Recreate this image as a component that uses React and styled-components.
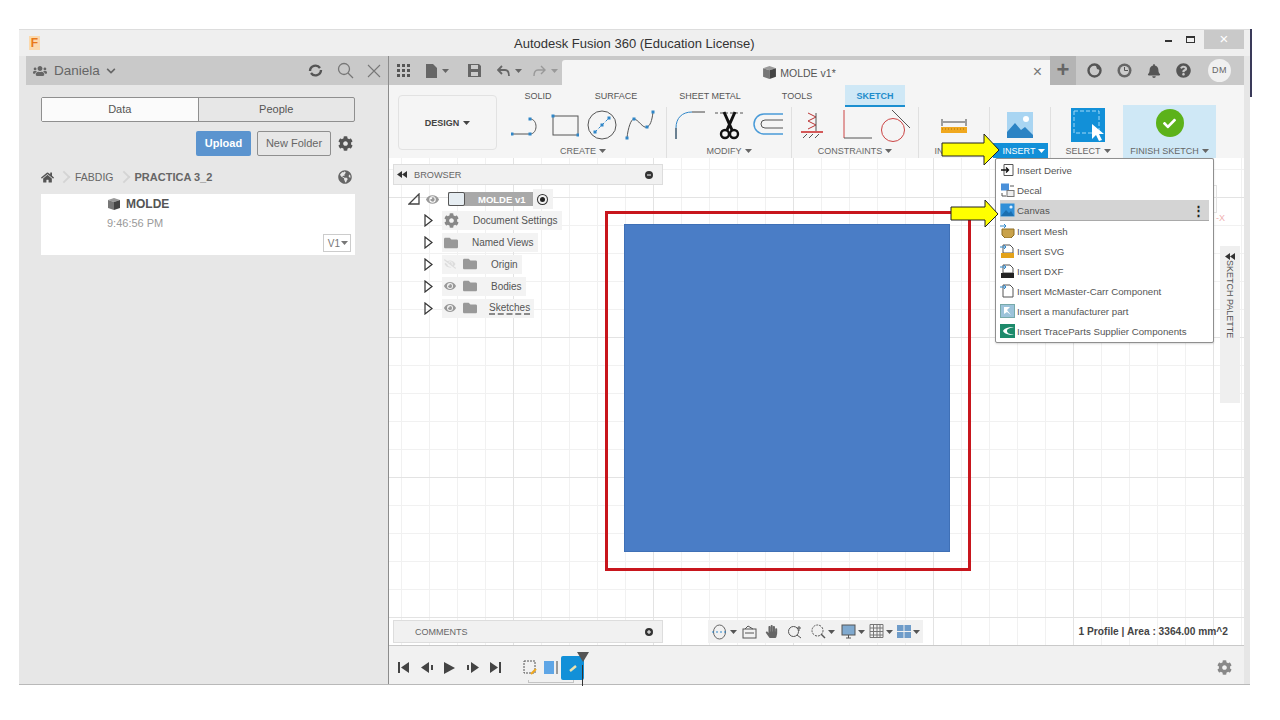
import React from 'react'
import styled, { createGlobalStyle } from 'styled-components'
import { FaCog, FaHome, FaBell, FaQuestionCircle, FaCheck, FaEye, FaEyeSlash, FaFolder, FaChevronDown, FaHandPaper, FaUsers, FaGlobeAmericas } from 'react-icons/fa'

const GlobalStyle = createGlobalStyle`
  body {
    margin: 0;
    background: #ffffff;
    font-family: "Liberation Sans", Arial, sans-serif;
    color: #555555;
  }
`

const Cube = ({ size = 14 }) => (
  <svg width={size} height={size} viewBox="0 0 14 14">
    <path d="M1 3l6-2 6 2-6 2z" fill="#9a9a9a" />
    <path d="M1 3l6 2v8l-6-2z" fill="#777" />
    <path d="M13 3l-6 2v8l6-2z" fill="#444" />
  </svg>
)

const Caret = () => (
  <svg width="7" height="4" viewBox="0 0 7 4">
    <path d="M0 0h7L3.5 4z" fill="currentColor" />
  </svg>
)

const DoubleArrow = () => (
  <svg width="10" height="7" viewBox="0 0 10 7">
    <path d="M5 0v7L0 3.500zM10 0v7L5 3.500z" fill="#333" />
  </svg>
)

const Line = ({ w, h, children }) => (
  <svg width={w} height={h} viewBox={`0 0 ${w} ${h}`} fill="none">
    {children}
  </svg>
)

const Dot = ({ x, y }) => <rect x={x - 1.5} y={y - 1.5} width="3" height="3" fill="#2f86c8" />

const MenuIcon = ({ kind }) => {
  if (kind === 'derive')
    return (
      <Line w={15} h={14}>
        <path d="M4 1.500h9v11H4z" stroke="#555" />
        <path d="M1 7h7M6 4.500L8.500 7 6 9.500" stroke="#111" strokeWidth="1.4" />
      </Line>
    )
  if (kind === 'decal')
    return (
      <Line w={15} h={14}>
        <rect x="1" y="0.5" width="8" height="7" fill="#4a90d9" />
        <path d="M10 3h4M2 10v3h4" stroke="#555" />
        <rect x="7" y="7.5" width="7" height="6" fill="#eee" stroke="#777" />
      </Line>
    )
  if (kind === 'canvas')
    return (
      <Line w={15} h={14}>
        <rect x="0.5" y="0.5" width="14" height="13" fill="#2f8fd8" />
        <path d="M1 13l5-6 3 3 2-2 3 5z" fill="#1c6fb0" />
        <circle cx="11" cy="4" r="1.6" fill="#dff1ff" />
      </Line>
    )
  if (kind === 'mesh')
    return (
      <Line w={15} h={14}>
        <path d="M2 5h12v6l-3 3H5l-3-3z" fill="#c9a24a" stroke="#8c6d24" />
        <path d="M0 2h6M4 0l2 2-2 2" stroke="#2f86c8" />
      </Line>
    )
  if (kind === 'svg' || kind === 'dxf')
    return (
      <Line w={15} h={14}>
        <path d="M3 1h7l3 3v5H3z" fill="#fff" stroke="#555" />
        <path d="M0 3h6M4 1l2 2-2 2" stroke="#2f86c8" />
        <rect x="1" y="9" width="13" height="5" fill={kind === 'svg' ? '#e3a21a' : '#222'} />
      </Line>
    )
  if (kind === 'mcmaster')
    return (
      <Line w={15} h={14}>
        <path d="M3 1h7l3 3v9H3z" fill="#fff" stroke="#555" />
        <path d="M0 3h6M4 1l2 2-2 2" stroke="#2f86c8" />
      </Line>
    )
  if (kind === 'maker')
    return (
      <Line w={15} h={14}>
        <rect x="0.5" y="0.5" width="14" height="13" fill="#9cc3da" stroke="#7aa" />
        <path d="M4 3h6L7 6l4 5-4-3-3 2z" fill="#fff" />
      </Line>
    )
  return (
    <Line w={15} h={14}>
      <rect width="15" height="14" fill="#1d8a6b" />
      <path d="M14 3C7 3 4 5 3 7c1 2 4 4 11 4-5-1-7-2-7-4s2-3 7-4z" fill="#fff" />
    </Line>
  )
}

const menuItems = [
  { kind: 'derive', label: 'Insert Derive' },
  { kind: 'decal', label: 'Decal' },
  { kind: 'canvas', label: 'Canvas', active: true },
  { kind: 'mesh', label: 'Insert Mesh' },
  { kind: 'svg', label: 'Insert SVG' },
  { kind: 'dxf', label: 'Insert DXF' },
  { kind: 'mcmaster', label: 'Insert McMaster-Carr Component' },
  { kind: 'maker', label: 'Insert a manufacturer part' },
  { kind: 'trace', label: 'Insert TraceParts Supplier Components' },
]

const treeItems = [
  { label: 'Document Settings', icon: 'gear' },
  { label: 'Named Views', icon: 'folder' },
  { label: 'Origin', icon: 'folder', eye: 'off' },
  { label: 'Bodies', icon: 'folder', eye: 'on' },
  { label: 'Sketches', icon: 'folder', eye: 'on', hatched: true },
]

const App = () => (
  <Page>
    <GlobalStyle />
    <Window>
      <TitleBar>
        <Logo>F</Logo>
        <Title>Autodesk Fusion 360 (Education License)</Title>
        <WinControls>
          <WinBtn>
            <Minimize />
          </WinBtn>
          <WinBtn>
            <Maximize />
          </WinBtn>
          <CloseBtn>×</CloseBtn>
        </WinControls>
      </TitleBar>
      <Main>
        <LeftPanel>
          <TeamHeader>
            <FaUsers size={14} color="#666" />
            <TeamName>Daniela</TeamName>
            <FaChevronDown size={10} color="#666" />
            <HeaderTools>
              <Line w={17} h={15}>
                <path d="M3 8a5.500 5.500 0 0 1 10-3M14 7a5.500 5.500 0 0 1-10 3" stroke="#555" strokeWidth="2.4" />
              </Line>
              <Line w={17} h={17}>
                <circle cx="7" cy="7" r="5.5" stroke="#777" strokeWidth="1.3" />
                <path d="M11 11l5 5" stroke="#777" strokeWidth="1.3" />
              </Line>
              <Line w={14} h={14}>
                <path d="M1 1l12 12M13 1L1 13" stroke="#777" strokeWidth="1.1" />
              </Line>
            </HeaderTools>
          </TeamHeader>
          <PanelBody>
            <Segment>
              <SegmentTab $active>Data</SegmentTab>
              <SegmentTab>People</SegmentTab>
            </Segment>
            <ActionRow>
              <UploadBtn>Upload</UploadBtn>
              <FolderBtn>New Folder</FolderBtn>
              <GearWrap>
                <FaCog size={15} color="#555" />
              </GearWrap>
            </ActionRow>
            <Crumbs>
              <FaHome size={13} color="#555" />
              <Chevron />
              <Crumb>FABDIG</Crumb>
              <Chevron />
              <Crumb $current>PRACTICA 3_2</Crumb>
              <GlobeWrap>
                <FaGlobeAmericas size={14} color="#666" />
              </GlobeWrap>
            </Crumbs>
            <FileCard>
              <FileName>
                <Cube />
                MOLDE
              </FileName>
              <FileTime>9:46:56 PM</FileTime>
              <Version>
                V1
                <Caret />
              </Version>
            </FileCard>
          </PanelBody>
        </LeftPanel>
        <RightPanel>
          <TopBar>
            <QuickTools>
              <Line w={13} h={13}>
                <path d="M0 1.500h13M0 6.500h13M0 11.500h13" stroke="#555" strokeWidth="3" strokeDasharray="3 2" />
              </Line>
              <QuickGroup $mr={3}>
                <Line w={11} h={14}>
                  <path d="M0 0h7l4 4v10H0z" fill="#666" />
                </Line>
                <Caret />
              </QuickGroup>
              <Line w={13} h={13}>
                <path d="M0 0h11l2 2v11H0z" fill="#666" />
                <rect x="3" y="1" width="7" height="4" fill="#ccc" />
                <rect x="3" y="8" width="7" height="4" fill="#ccc" />
              </Line>
              <QuickGroup $mr={-5}>
                <Line w={13} h={12}>
                  <path d="M5 1L1 5l4 4M1 5h7c3 0 4 2 4 6" stroke="#666" strokeWidth="1.8" />
                </Line>
                <Caret />
              </QuickGroup>
              <QuickGroup $muted>
                <Line w={13} h={12}>
                  <path d="M8 1l4 4-4 4M12 5H5c-3 0-4 2-4 6" stroke="#999" strokeWidth="1.4" />
                </Line>
                <Caret />
              </QuickGroup>
            </QuickTools>
            <DocTab>
              <DocName>
                <Cube size={15} />
                MOLDE v1*
              </DocName>
              <DocClose>×</DocClose>
            </DocTab>
            <UserTools>
              <PlusBtn>+</PlusBtn>
              <UserIcons>
                <Line w={15} h={15}>
                  <circle cx="7.5" cy="7.5" r="6" stroke="#555" strokeWidth="2.4" />
                  <path d="M7 1l5 1 1 5-3-1-1-3z" fill="#555" />
                </Line>
                <Line w={15} h={15}>
                  <circle cx="7.5" cy="7.5" r="7" fill="#666" />
                  <circle cx="7.5" cy="7.5" r="4.5" fill="#ccc" />
                  <path d="M7.500 4v3.500H11" stroke="#555" />
                </Line>
                <FaBell size={14} color="#555" />
                <FaQuestionCircle size={15} color="#555" />
                <Avatar>DM</Avatar>
              </UserIcons>
            </UserTools>
          </TopBar>
          <Ribbon>
            <DesignBtn>
              DESIGN
              <Caret />
            </DesignBtn>
            <RibbonBody>
              <TabRow>
                <RibbonTab $w={60}>SOLID</RibbonTab>
                <RibbonTab $w={96}>SURFACE</RibbonTab>
                <RibbonTab $w={92}>SHEET METAL</RibbonTab>
                <RibbonTab $w={82}>TOOLS</RibbonTab>
                <SketchTab>SKETCH</SketchTab>
              </TabRow>
              <Groups>
                <Group $w={158} $pr={8}>
                  <IconRow $gap={8}>
                    <Line w={32} h={24}>
                      <path d="M1 21h18c8 0 8-15 0-15" stroke="#555" />
                      <Dot x={1} y={21} />
                      <Dot x={19} y={21} />
                      <Dot x={19} y={6} />
                    </Line>
                    <Line w={28} h={24}>
                      <rect x="2" y="3" width="25" height="19" stroke="#555" />
                      <Dot x={2} y={3} />
                      <Dot x={27} y={22} />
                    </Line>
                    <Line w={30} h={30}>
                      <circle cx="15" cy="15" r="14" stroke="#555" />
                      <path d="M8 22L22 8" stroke="#2f86c8" strokeDasharray="3 2" />
                      <Dot x={8} y={22} />
                      <Dot x={15} y={15} />
                      <Dot x={22} y={8} />
                    </Line>
                    <Line w={30} h={32}>
                      <path d="M2 29c1-10 4-19 7-19 4 0 9 10 13 8 3-1 5-6 6-15" stroke="#555" />
                      <Dot x={2} y={29} />
                      <Dot x={9} y={10} />
                      <Dot x={22} y={18} />
                      <Dot x={28} y={3} />
                    </Line>
                  </IconRow>
                  <GroupLabel>
                    CREATE
                    <Caret />
                  </GroupLabel>
                </Group>
                <Group $w={125} $sep>
                  <IconRow $gap={8}>
                    <Line w={32} h={30}>
                      <path d="M2 29V18C2 8 8 2 18 2" stroke="#2f86c8" />
                      <path d="M2 29V18M18 2h13" stroke="#444" />
                    </Line>
                    <Line w={30} h={30}>
                      <path d="M1 3h28" stroke="#555" strokeDasharray="3 2" />
                      <path d="M10 2l8 18M21 2l-8 18" stroke="#111" strokeWidth="3" />
                      <circle cx="11" cy="24" r="4" stroke="#111" strokeWidth="2.4" />
                      <circle cx="20" cy="24" r="4" stroke="#111" strokeWidth="2.4" />
                    </Line>
                    <Line w={32} h={26}>
                      <path d="M31 2H12a10 10 0 0 0 0 20h19" stroke="#4a9bd8" strokeWidth="1.5" />
                      <path d="M31 8H13a4 4 0 0 0 0 8h18" stroke="#555" />
                    </Line>
                  </IconRow>
                  <GroupLabel>
                    MODIFY
                    <Caret />
                  </GroupLabel>
                </Group>
                <Group $w={127} $sep>
                  <IconRow $gap={19}>
                    <Line w={24} h={28}>
                      <path d="M8 2l8 4-8 4 8 4-8 4" stroke="#b33" />
                      <path d="M16 2v18" stroke="#555" />
                      <path d="M1 21h22" stroke="#c33" strokeWidth="1.6" />
                      <path d="M3 27l4-4M9 27l4-4M15 27l4-4" stroke="#555" />
                    </Line>
                    <Line w={68} h={36}>
                      <path d="M1 3v28" stroke="#c44" />
                      <path d="M1 31h28" stroke="#555" />
                      <circle cx="50" cy="23" r="11.5" stroke="#c44" />
                      <path d="M49 3l18 18" stroke="#555" />
                    </Line>
                  </IconRow>
                  <GroupLabel>
                    CONSTRAINTS
                    <Caret />
                  </GroupLabel>
                </Group>
                <Group $w={71} $sep>
                  <IconRow>
                    <Line w={26} h={15}>
                      <path d="M1 1v7M25 1v7" stroke="#444" />
                      <path d="M2 4h22" stroke="#444" />
                      <rect y="9" width="26" height="6" fill="#f0a81e" />
                      <path d="M1 11h24" stroke="#a8740f" strokeDasharray="1 2" />
                    </Line>
                  </IconRow>
                  <GroupLabel>INSPECT</GroupLabel>
                </Group>
                <Group $w={61} $sep>
                  <IconRow>
                    <Line w={26} h={26}>
                      <rect width="26" height="26" fill="#a9d5f2" />
                      <path d="M0 26v-6l8-9 6 7 4-3 8 8v3z" fill="#2b83c4" />
                      <circle cx="19" cy="7" r="3" fill="#fff" />
                    </Line>
                  </IconRow>
                  <InsertLabel>
                    INSERT
                    <Caret />
                  </InsertLabel>
                </Group>
                <Group $w={71} $sep $pl={4}>
                  <IconRow>
                    <Line w={34} h={34}>
                      <rect width="34" height="34" fill="#1290d8" />
                      <rect x="3" y="3" width="25" height="22" stroke="#9fd8f7" strokeDasharray="4 2" />
                      <path d="M21 16v15l4-4 3 6 3-1-3-6h5z" fill="#fff" />
                    </Line>
                  </IconRow>
                  <GroupLabel>
                    SELECT
                    <Caret />
                  </GroupLabel>
                </Group>
                <FinishGroup>
                  <FinishIcon>
                    <FaCheck size={13} color="#fff" />
                  </FinishIcon>
                  <GroupLabel>
                    FINISH SKETCH
                    <Caret />
                  </GroupLabel>
                </FinishGroup>
              </Groups>
            </RibbonBody>
          </Ribbon>
          <Canvas>
            <Sheet />
            <RedFrame />
            <BrowserPanel>
              <PanelBar>
                <PanelArrows>
                  <DoubleArrow />
                </PanelArrows>
                <PanelTitle>BROWSER</PanelTitle>
                <PanelToggle>
                  <Line w={8} h={8}>
                    <circle cx="4" cy="4" r="4" fill="#333" />
                    <path d="M2 4h4" stroke="#fff" />
                  </Line>
                </PanelToggle>
              </PanelBar>
              <Tree>
                <RootRow>
                  <Line w={12} h={12}>
                    <path d="M1 11L11 1v10z" stroke="#444" strokeWidth="1.3" />
                  </Line>
                  <RootEye>
                    <FaEye size={13} color="#999" />
                  </RootEye>
                  <RootChip>
                    <RootBox />
                    <RootName>MOLDE v1</RootName>
                  </RootChip>
                  <RadioWrap>
                    <Radio />
                  </RadioWrap>
                </RootRow>
                {treeItems.map((item) => (
                  <TreeRow key={item.label}>
                    <Line w={10} h={13}>
                      <path d="M1 1l7 5.500L1 12z" stroke="#333" strokeWidth="1.2" />
                    </Line>
                    <TreeChip>
                      {item.eye === 'on' && <FaEye size={12} color="#999" />}
                      {item.eye === 'off' && <FaEyeSlash size={12} color="#ddd" />}
                      {item.icon === 'gear' ? <FaCog size={15} color="#888" /> : <FaFolder size={14} color="#999" />}
                      <TreeLabel $hatched={item.hatched}>{item.label}</TreeLabel>
                    </TreeChip>
                  </TreeRow>
                ))}
              </Tree>
            </BrowserPanel>
            <InsertMenu>
              {menuItems.map((item) => (
                <MenuItem key={item.label} $active={item.active}>
                  <MenuIcon kind={item.kind} />
                  <MenuText>{item.label}</MenuText>
                  {item.active && <MenuDots>⋮</MenuDots>}
                </MenuItem>
              ))}
            </InsertMenu>
            <AxisBox />
            <AxisLabel>-X</AxisLabel>
            <Palette>
              <DoubleArrow />
              <PaletteText>SKETCH PALETTE</PaletteText>
            </Palette>
            <CommentsPanel>
              <CommentsTitle>COMMENTS</CommentsTitle>
              <PanelToggle>
                <Line w={8} h={8}>
                  <circle cx="4" cy="4" r="4" fill="#333" />
                  <path d="M2 4h4M4 2v4" stroke="#fff" />
                </Line>
              </PanelToggle>
            </CommentsPanel>
            <NavBar>
              <Line w={17} h={16}>
                <ellipse cx="8.5" cy="8" rx="6" ry="7" stroke="#666" />
                <path d="M1 8h15" stroke="#2f86c8" strokeDasharray="2 2" />
              </Line>
              <Caret />
              <NavGap $w={1} />
              <Line w={15} h={15}>
                <rect x="1" y="5" width="13" height="9" stroke="#555" />
                <path d="M3 9h9M3 5l3-3 5 3" stroke="#555" />
              </Line>
              <NavGap $w={4} />
              <FaHandPaper size={13} color="#666" />
              <NavGap $w={5} />
              <Line w={16} h={15}>
                <circle cx="6.5" cy="7.5" r="5" stroke="#555" />
                <path d="M10 11l4 3M12 2v5M10 4h4" stroke="#555" />
              </Line>
              <NavGap $w={4} />
              <Line w={15} h={15}>
                <circle cx="6.5" cy="6.5" r="5.5" stroke="#555" strokeDasharray="2 1" />
                <path d="M10 10l4 4" stroke="#555" strokeWidth="1.4" />
              </Line>
              <Caret />
              <NavGap $w={2} />
              <Line w={15} h={15}>
                <rect x="1" y="1" width="13" height="10" fill="#7fa9cf" stroke="#555" />
                <path d="M5 14h5M7.500 11v3" stroke="#555" />
              </Line>
              <Caret />
              <NavGap $w={0} />
              <Line w={15} h={15}>
                <path d="M1 .5h13v13H1zM1 4h13M1 7.500h13M1 11h13M4.500 .5v13M8 .5v13M11 .5v13" stroke="#777" />
              </Line>
              <Caret />
              <NavGap $w={0} />
              <Line w={14} h={13}>
                <path d="M0 0h6.500v6H0zM7.500 0H14v6H7.500zM0 7h6.500v6H0zM7.500 7H14v6H7.500z" fill="#6f9cc9" />
              </Line>
              <Caret />
            </NavBar>
            <Status>1 Profile | Area : 3364.00 mm^2</Status>
          </Canvas>
          <Timeline>
            <Playback>
              <Line w={11} h={11}>
                <path d="M0 0h2v11H0zM11 0v11L3 5.500z" fill="#444" />
              </Line>
              <Line w={12} h={11}>
                <path d="M8 0v11L0 5.500zM10 3h2v5h-2z" fill="#444" />
              </Line>
              <Line w={11} h={12}>
                <path d="M0 0l11 6-11 6z" fill="#444" />
              </Line>
              <Line w={12} h={11}>
                <path d="M4 0v11l8-5.500zM0 3h2v5H0z" fill="#444" />
              </Line>
              <Line w={11} h={11}>
                <path d="M11 0H9v11h2zM0 0v11l8-5.500z" fill="#444" />
              </Line>
            </Playback>
            <Steps>
              <Line w={14} h={15}>
                <rect x="1" y="1" width="11" height="12" stroke="#555" strokeDasharray="2 1" />
                <path d="M8 14l5-5" stroke="#f0a81e" strokeWidth="2" />
              </Line>
              <Line w={14} h={15}>
                <rect x="0" y="1" width="10" height="13" fill="#5fa6e6" />
                <path d="M13 1v13" stroke="#444" />
              </Line>
              <CurrentStep>
                <Line w={10} h={10}>
                  <path d="M2 8l6-5" stroke="#e9e2b0" strokeWidth="2.4" />
                </Line>
                <Marker />
              </CurrentStep>
              <Bracket />
            </Steps>
            <TimelineGear>
              <FaCog size={15} color="#888" />
            </TimelineGear>
          </Timeline>
        </RightPanel>
        <SideStrip />
      </Main>
      <TopArrow viewBox="0 0 59 33">
        <path d="M1 10h42V1l15 16-15 15v-9H1z" fill="#ffff00" stroke="#222" />
      </TopArrow>
      <MenuArrow viewBox="0 0 49 29">
        <path d="M1 8h34V1l13 14-13 13v-7H1z" fill="#ffff00" stroke="#222" />
      </MenuArrow>
      <EdgeLine />
    </Window>
  </Page>
)

export default App

const Page = styled.div`
  width: 1280px;
  height: 720px;
  padding: 29px 0 0 19px;
  box-sizing: border-box;
  overflow: hidden;
`

const Window = styled.div`
  position: relative;
  display: flex;
  flex-direction: column;
  width: 1231px;
  height: 656px;
  background: #efefef;
  border-bottom: 1px solid #b9b9b9;
  box-sizing: border-box;
`

const TitleBar = styled.div`
  position: relative;
  display: flex;
  align-items: flex-start;
  height: 27px;
  border-top: 1px solid #dddddd;
  box-sizing: border-box;
`

const Logo = styled.div`
  margin: 6px 0 0 10px;
  width: 11px;
  height: 14px;
  background: #fbd9ad;
  color: #e8781a;
  font-size: 12px;
  font-weight: bold;
  line-height: 14px;
  text-align: center;
`

const Title = styled.div`
  position: absolute;
  left: 495px;
  top: 6px;
  color: #333333;
  font-size: 13px;
`

const WinControls = styled.div`
  display: flex;
  align-items: center;
  margin-left: auto;
  margin-right: 6px;
  height: 19px;
`

const WinBtn = styled.div`
  display: flex;
  align-items: center;
  justify-content: center;
  width: 22px;
`

const Minimize = styled.div`
  width: 7px;
  height: 2px;
  margin-top: 3px;
  background: #333333;
`

const Maximize = styled.div`
  width: 7px;
  height: 4px;
  border: 1px solid #333333;
  border-top-width: 2px;
`

const CloseBtn = styled.div`
  margin-left: 3px;
  width: 40px;
  height: 19px;
  background: #c9c9c9;
  color: #ffffff;
  font-size: 15px;
  line-height: 18px;
  text-align: center;
`

const Main = styled.div`
  display: flex;
  flex: 1;
  min-height: 0;
`

const LeftPanel = styled.div`
  width: 369px;
  background: #e7e7e7;
`

const TeamHeader = styled.div`
  display: flex;
  align-items: center;
  gap: 6px;
  margin-left: 7px;
  padding: 0 7px;
  height: 29px;
  background: #c9c9c9;
`

const TeamName = styled.span`
  margin-left: 1px;
  color: #666666;
  font-size: 13.5px;
`

const HeaderTools = styled.div`
  display: flex;
  align-items: center;
  gap: 13px;
  margin-left: auto;
`

const PanelBody = styled.div`
  padding: 12px 33px 0 22px;
`

const Segment = styled.div`
  display: flex;
  height: 25px;
  border: 1px solid #8f8f8f;
  border-radius: 2px;
  box-sizing: border-box;
`

const SegmentTab = styled.div`
  flex: 1;
  background: ${({ $active }) => ($active ? '#fbfbfb' : 'transparent')};
  border-right: ${({ $active }) => ($active ? '1px solid #8f8f8f' : 'none')};
  color: #555555;
  font-size: 11px;
  line-height: 23px;
  text-align: center;
`

const ActionRow = styled.div`
  display: flex;
  align-items: center;
  justify-content: flex-end;
  margin: 9px -5px 0 0;
  height: 25px;
`

const UploadBtn = styled.div`
  width: 55px;
  height: 25px;
  background: #5b94cf;
  border-radius: 2px;
  color: #ffffff;
  font-size: 11px;
  font-weight: bold;
  line-height: 24px;
  text-align: center;
`

const FolderBtn = styled.div`
  margin-left: 6px;
  width: 74px;
  height: 25px;
  border: 1px solid #8f8f8f;
  border-radius: 2px;
  box-sizing: border-box;
  color: #666666;
  font-size: 11px;
  line-height: 23px;
  text-align: center;
`

const GearWrap = styled.div`
  display: flex;
  justify-content: center;
  width: 29px;
`

const Crumbs = styled.div`
  display: flex;
  align-items: center;
  margin-top: 12px;
  height: 18px;
`

const Chevron = styled.div`
  margin: 0 6px 0 5px;
  width: 8px;
  height: 8px;
  border-top: 2px solid #d4d4d4;
  border-right: 2px solid #d4d4d4;
  transform: rotate(45deg) scale(0.9);
`

const Crumb = styled.span`
  color: #666666;
  font-size: ${({ $current }) => ($current ? '11px' : '10.5px')};
  font-weight: ${({ $current }) => ($current ? 'bold' : 'normal')};
`

const GlobeWrap = styled.div`
  display: flex;
  margin: 0 3px 0 auto;
`

const FileCard = styled.div`
  position: relative;
  margin-top: 8px;
  padding: 3px 0 0 66px;
  height: 61px;
  background: #ffffff;
  box-sizing: border-box;
`

const FileName = styled.div`
  display: flex;
  align-items: center;
  gap: 5px;
  color: #555555;
  font-size: 12px;
  font-weight: bold;
`

const FileTime = styled.div`
  margin-top: 6px;
  color: #9a9a9a;
  font-size: 11px;
`

const Version = styled.div`
  position: absolute;
  top: 40px;
  right: 4px;
  display: flex;
  align-items: center;
  gap: 1px;
  padding: 0 2px 0 4px;
  height: 16px;
  border: 1px solid #cccccc;
  color: #777777;
  font-size: 10px;
`

const RightPanel = styled.div`
  display: flex;
  flex: 1;
  flex-direction: column;
  min-width: 0;
  border-left: 1px solid #8c8c8c;
`

const TopBar = styled.div`
  display: flex;
  height: 29px;
  background: #c9c9c9;
`

const QuickTools = styled.div`
  display: flex;
  align-items: center;
  gap: 16px;
  padding-left: 8px;
  width: 173px;
  box-sizing: border-box;
`

const QuickGroup = styled.div`
  display: flex;
  align-items: center;
  gap: 5px;
  margin-right: ${({ $mr }) => $mr || 0}px;
  color: ${({ $muted }) => ($muted ? '#999999' : '#666666')};
`

const DocTab = styled.div`
  position: relative;
  display: flex;
  align-items: center;
  justify-content: center;
  flex: 1;
  margin-top: 4px;
  background: #f5f5f5;
  border-radius: 3px 0 0 0;
`

const DocName = styled.div`
  display: flex;
  align-items: center;
  gap: 3px;
  margin-right: 14px;
  color: #555555;
  font-size: 10.5px;
`

const DocClose = styled.span`
  position: absolute;
  right: 8px;
  top: 4px;
  color: #777777;
  font-size: 16px;
  line-height: 16px;
`

const UserTools = styled.div`
  display: flex;
  align-items: center;
  width: 194px;
`

const PlusBtn = styled.div`
  width: 26px;
  height: 29px;
  background: #b4b4b4;
  color: #666666;
  font-size: 22px;
  font-weight: bold;
  line-height: 28px;
  text-align: center;
`

const UserIcons = styled.div`
  display: flex;
  flex: 1;
  align-items: center;
  gap: 15px;
  padding-left: 11px;
`

const Avatar = styled.div`
  margin-left: 2px;
  width: 23px;
  height: 23px;
  border-radius: 50%;
  background: #f0f0f0;
  color: #666666;
  font-size: 9px;
  line-height: 23px;
  letter-spacing: 0.5px;
  text-align: center;
`

const Ribbon = styled.div`
  display: flex;
  align-items: flex-start;
  height: 73px;
  background: #f5f5f5;
  box-sizing: border-box;
`

const DesignBtn = styled.div`
  display: flex;
  align-items: center;
  justify-content: center;
  gap: 4px;
  margin: 10px 0 0 9px;
  width: 99px;
  height: 55px;
  border: 1px solid #e2e2e2;
  border-radius: 4px;
  box-sizing: border-box;
  color: #444444;
  font-size: 9px;
  font-weight: bold;
`

const RibbonBody = styled.div`
  display: flex;
  flex-direction: column;
  margin-left: 11px;
  flex: 1;
`

const TabRow = styled.div`
  display: flex;
  height: 22px;
`

const RibbonTab = styled.div`
  width: ${({ $w }) => $w}px;
  padding-top: 6px;
  color: #555555;
  font-size: 9px;
  text-align: center;
`

const SketchTab = styled.div`
  margin-left: 7px;
  width: 60px;
  height: 22px;
  padding-top: 6px;
  background: #cfe8f6;
  border-bottom: 2px solid #1b8fd0;
  box-sizing: border-box;
  color: #1f8ccb;
  font-size: 9px;
  font-weight: bold;
  text-align: center;
`

const Groups = styled.div`
  display: flex;
  height: 51px;
`

const Group = styled.div`
  display: flex;
  flex-direction: column;
  align-items: center;
  width: ${({ $w }) => $w}px;
  padding-right: ${({ $pr }) => $pr || 0}px;
  padding-left: ${({ $pl }) => $pl || 0}px;
  box-sizing: border-box;
  ${({ $sep }) => $sep && 'border-left: 1px solid #e0e0e0;'}
`

const IconRow = styled.div`
  display: flex;
  flex: none;
  align-items: center;
  justify-content: center;
  gap: ${({ $gap }) => $gap || 0}px;
  height: 36px;
`

const GroupLabel = styled.div`
  display: flex;
  flex: none;
  align-items: center;
  justify-content: center;
  gap: 3px;
  height: 15px;
  color: #666666;
  font-size: 9px;
  white-space: nowrap;
`

const InsertLabel = styled(GroupLabel)`
  padding-left: 8px;
  width: 55px;
  background: #1290d8;
  box-sizing: border-box;
  color: #ffffff;
`

const FinishGroup = styled.div`
  display: flex;
  flex-direction: column;
  align-items: center;
  justify-content: flex-end;
  margin: -2px 0 0 2px;
  width: 93px;
  height: 53px;
  background: #cfe8f6;
`

const FinishIcon = styled.div`
  display: flex;
  align-items: center;
  justify-content: center;
  margin-bottom: 6px;
  width: 28px;
  height: 28px;
  border-radius: 50%;
  background: #5cb21a;
`

const Canvas = styled.div`
  position: relative;
  flex: 1;
  background-color: #ffffff;
  background-image:
    linear-gradient(to right, #e3e3e3 1px, transparent 1px),
    linear-gradient(to bottom, #e3e3e3 1px, transparent 1px),
    linear-gradient(to right, #f1f1f1 1px, transparent 1px),
    linear-gradient(to bottom, #f1f1f1 1px, transparent 1px);
  background-size: 140px 140px, 140px 140px, 28px 28px, 28px 28px;
  background-position: 124px 0, 0 39px, 12px 0, 0 11px;
`

const Sheet = styled.div`
  position: absolute;
  left: 235px;
  top: 66px;
  width: 326px;
  height: 328px;
  background: #4a7dc6;
  border: 1px solid #3f70b6;
  box-sizing: border-box;
`

const RedFrame = styled.div`
  position: absolute;
  left: 216px;
  top: 53px;
  width: 366px;
  height: 360px;
  border: 3px solid #c8161d;
  box-sizing: border-box;
`

const BrowserPanel = styled.div`
  position: absolute;
  left: 4px;
  top: 6px;
  width: 270px;
`

const PanelBar = styled.div`
  display: flex;
  align-items: center;
  height: 21px;
  background: #f1f1f1;
  border: 1px solid #dddddd;
  box-sizing: border-box;
`

const PanelArrows = styled.span`
  display: flex;
  margin-left: 3px;
`

const PanelTitle = styled.span`
  margin-left: 7px;
  color: #666666;
  font-size: 9.2px;
`

const PanelToggle = styled.span`
  display: flex;
  margin: 0 9px 0 auto;
`

const Tree = styled.div`
  display: flex;
  flex-direction: column;
  gap: 2px;
  padding: 4px 0 0 15px;
`

const RootRow = styled.div`
  display: flex;
  align-items: center;
  height: 20px;
`

const RootEye = styled.div`
  display: flex;
  margin: 0 7px 0 6px;
`

const RootChip = styled.div`
  display: flex;
  align-items: center;
  margin-left: 2px;
  height: 14px;
  background: #a9a9a9;
`

const RootBox = styled.div`
  width: 15px;
  height: 12px;
  background: #e6edf2;
  border: 1px solid #555555;
  border-radius: 2px;
`

const RootName = styled.span`
  padding: 0 7px 0 13px;
  color: #ffffff;
  font-size: 9.5px;
  font-weight: bold;
`

const RadioWrap = styled.div`
  display: flex;
  align-items: center;
  justify-content: center;
  width: 20px;
  height: 20px;
  background: #f2f2f2;
`

const Radio = styled.div`
  width: 5px;
  height: 5px;
  border-radius: 50%;
  background: #222222;
  box-shadow: 0 0 0 2px #f2f2f2, 0 0 0 3px #333333;
`

const TreeRow = styled.div`
  display: flex;
  align-items: center;
  gap: 8px;
  padding-left: 16px;
  height: 19.8px;
`

const TreeChip = styled.div`
  display: flex;
  align-items: center;
  gap: 7px;
  padding: 0 4px 0 2px;
  height: 19px;
  background: #f3f3f3;
`

const TreeLabel = styled.span`
  margin-left: 7px;
  color: #555555;
  font-size: 10px;
  ${({ $hatched }) => $hatched && 'border-bottom: 2px dashed #8a8a8a; margin-left: 5px;'}
`

const InsertMenu = styled.div`
  position: absolute;
  left: 606px;
  top: 0;
  display: flex;
  flex-direction: column;
  padding: 1px 4px 0;
  width: 219px;
  height: 185px;
  background: #ffffff;
  border: 1px solid #8f8f8f;
  border-radius: 2px;
  box-sizing: border-box;
  box-shadow: 0 1px 2px rgba(0, 0, 0, 0.15);
  z-index: 2;
`

const MenuItem = styled.div`
  display: flex;
  align-items: center;
  flex: none;
  gap: 2px;
  height: 20px;
  background: ${({ $active }) => ($active ? '#d4d4d4' : 'transparent')};
  border-bottom: ${({ $active }) => ($active ? '1px solid #a9a9a9' : 'none')};
`

const MenuText = styled.span`
  color: #555555;
  font-size: 9.7px;
  white-space: nowrap;
`

const MenuDots = styled.span`
  margin: 0 4px 0 auto;
  color: #222222;
  font-size: 13px;
  font-weight: bold;
`

const AxisBox = styled.div`
  position: absolute;
  left: 820px;
  top: 27px;
  width: 8px;
  height: 28px;
  border: 1px solid #e2e2e2;
  box-sizing: border-box;
`

const AxisLabel = styled.span`
  position: absolute;
  left: 827px;
  top: 55px;
  color: #f0b0b0;
  font-size: 9px;
`

const Palette = styled.div`
  position: absolute;
  left: 831px;
  top: 88px;
  display: flex;
  flex-direction: column;
  align-items: center;
  padding-top: 7px;
  width: 20px;
  height: 157px;
  background: #efefef;
  box-sizing: border-box;
`

const PaletteText = styled.span`
  color: #555555;
  font-size: 9px;
  writing-mode: vertical-rl;
`

const CommentsPanel = styled.div`
  position: absolute;
  left: 4px;
  bottom: 2px;
  display: flex;
  align-items: center;
  width: 270px;
  height: 23px;
  background: #f1f1f1;
  border: 1px solid #dddddd;
  box-sizing: border-box;
`

const CommentsTitle = styled.span`
  margin-left: 21px;
  color: #666666;
  font-size: 9px;
`

const NavBar = styled.div`
  position: absolute;
  left: 319px;
  bottom: 2px;
  display: flex;
  align-items: center;
  gap: 2px;
  padding: 0 3px;
  height: 23px;
  background: #f1f1f1;
  color: #555555;
`

const NavGap = styled.span`
  width: ${({ $w }) => $w}px;
`

const Status = styled.div`
  position: absolute;
  right: 16px;
  bottom: 8px;
  color: #444444;
  font-size: 10.2px;
  font-weight: bold;
  white-space: nowrap;
`

const Timeline = styled.div`
  display: flex;
  align-items: center;
  padding-top: 5px;
  height: 39px;
  background: #f1f1f1;
  border-top: 1px solid #c9c9c9;
  box-sizing: border-box;
`

const Playback = styled.div`
  display: flex;
  align-items: center;
  gap: 11.5px;
  margin-left: 9px;
`

const Steps = styled.div`
  position: relative;
  display: flex;
  align-items: center;
  gap: 7px;
  margin-left: 22px;
`

const CurrentStep = styled.div`
  position: relative;
  display: flex;
  align-items: center;
  justify-content: center;
  margin-left: -4px;
  width: 23px;
  height: 24px;
  background: #1290d8;
  border-radius: 2px;
`

const Marker = styled.div`
  position: absolute;
  top: -4px;
  right: -5px;
  width: 0;
  height: 0;
  border-left: 6px solid transparent;
  border-right: 6px solid transparent;
  border-top: 10px solid #555555;

  &::after {
    content: '';
    position: absolute;
    top: 3px;
    left: -1px;
    width: 1px;
    height: 21px;
    background: #333333;
  }
`

const Bracket = styled.div`
  position: absolute;
  left: 5px;
  top: 24px;
  width: 44px;
  height: 2px;
  border: 1px solid #c4c4c4;
  border-top: none;
`

const TimelineGear = styled.div`
  display: flex;
  margin: 0 12px 0 auto;
`

const SideStrip = styled.div`
  width: 6px;
  background: #e6e6e6;
`

const TopArrow = styled.svg`
  position: absolute;
  left: 922px;
  top: 104px;
  width: 59px;
  height: 33px;
  z-index: 3;
`

const MenuArrow = styled.svg`
  position: absolute;
  left: 931px;
  top: 170px;
  width: 49px;
  height: 29px;
  z-index: 3;
`

const EdgeLine = styled.div`
  position: absolute;
  left: 1231px;
  top: 0;
  width: 2px;
  height: 68px;
  background: #3a3a5a;
`
